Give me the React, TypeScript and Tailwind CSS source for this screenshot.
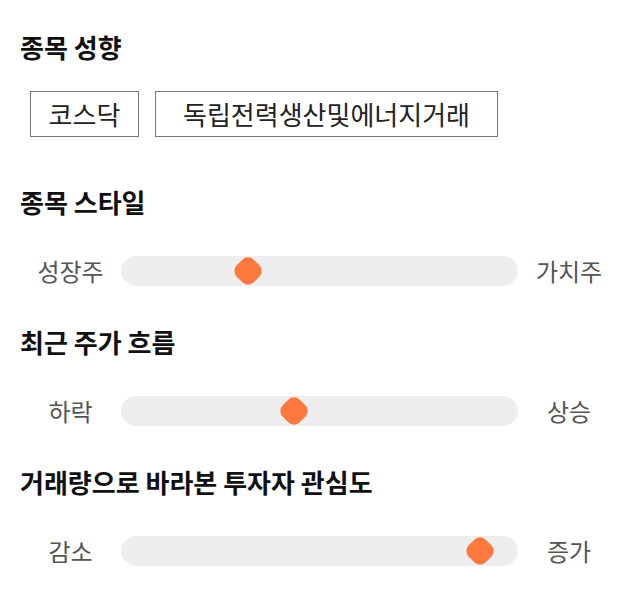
import React from "react";

const font = { fontFamily: '"Noto Sans CJK KR", "Noto Sans", sans-serif' };

type SliderProps = { left: string; right: string; value: number };

function Slider({ left, right, value }: SliderProps) {
  const track = 397;
  const thumb = 28;
  const center = thumb / 2 + (value / 100) * (track - thumb);
  return (
    <div className="flex items-center h-[30px]">
      <div className="w-[101px] text-center text-[24px] text-[#555] leading-none">{left}</div>
      <div className="relative w-[397px] h-[30px] rounded-full bg-[#eeeeee]">
        <div
          className="absolute top-1/2 w-[24px] h-[24px] -translate-x-1/2 -translate-y-1/2 rotate-45 rounded-[8px] bg-[#ff783e]"
          style={{ left: center }}
        />
      </div>
      <div className="w-[102px] text-center text-[24px] text-[#555] leading-none">{right}</div>
    </div>
  );
}

function Heading({ children, className = "" }: { children: React.ReactNode; className?: string }) {
  return (
    <div className={`h-[30px] flex items-center text-[26px] font-bold text-[#111] leading-none ${className}`}>
      {children}
    </div>
  );
}

export default function App() {
  return (
    <div className="w-[640px] h-[606px] bg-white pl-[20px] pt-[32px]" style={font}>
      <Heading>종목 성향</Heading>
      <div className="flex gap-[16px] ml-[10px] mt-[29px]">
        <div className="w-[109px] h-[46px] border border-[#777] flex items-center justify-center text-[26px] text-[#222] leading-none">
          코스닥
        </div>
        <div className="w-[343px] h-[46px] border border-[#777] flex items-center justify-center text-[26px] text-[#222] leading-none">
          독립전력생산및에너지거래
        </div>
      </div>
      <Heading className="mt-[50px]">종목 스타일</Heading>
      <div className="mt-[39px]">
        <Slider left="성장주" right="가치주" value={30.6} />
      </div>
      <Heading className="mt-[41px]">최근 주가 흐름</Heading>
      <div className="mt-[39px]">
        <Slider left="하락" right="상승" value={43} />
      </div>
      <Heading className="mt-[41px]">거래량으로 바라본 투자자 관심도</Heading>
      <div className="mt-[39px]">
        <Slider left="감소" right="증가" value={93.5} />
      </div>
    </div>
  );
}
